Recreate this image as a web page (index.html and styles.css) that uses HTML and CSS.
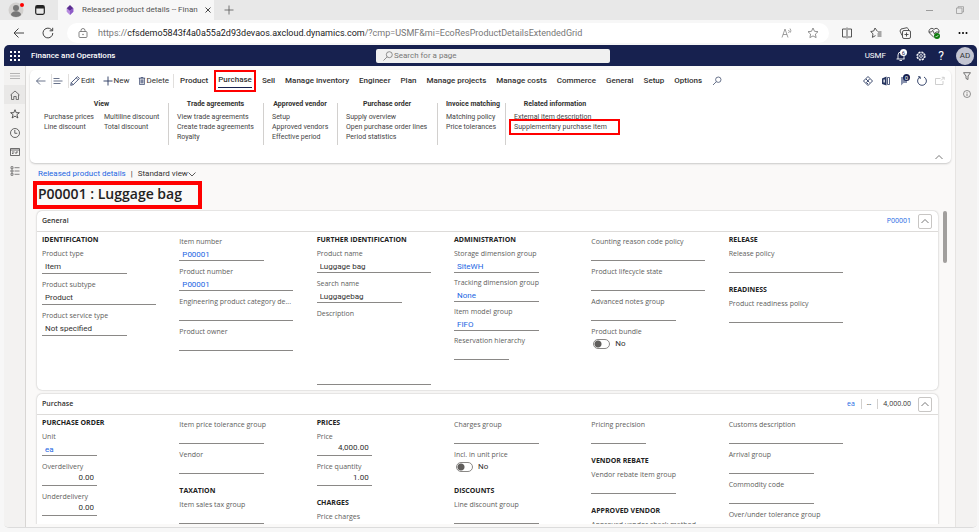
FILE: index.html
```
<!DOCTYPE html>
<html lang="en">

<head>
  <meta charset="UTF-8">
  <meta name="viewport" content="width=device-width, initial-scale=1.0">
  <title>Released product details -- Finance and Operations</title>
  <link rel="stylesheet" href="styles.css">
</head>

<body>
  <!-- browser tabs -->
  <div class="tabBar">
    <span class="profile">
      <svg class="icon16" viewBox="0 0 16 16"><circle cx="8" cy="8" r="7.5" fill="#d2d0ce"/><circle cx="8" cy="6" r="3" fill="#777"/><path d="M3 13c0-5 10-5 10 0-2 2.600-8 2.600-10 0z" fill="#777"/></svg>
      <i class="dot"></i>
    </span>
    <svg class="icon10" viewBox="0 0 10 10"><rect x=".7" y=".7" width="8.600" height="8.600" rx="1.500" fill="none" stroke="#222" stroke-width="1.200"/><path d="M1 1h8v2.500H1z" fill="#222"/></svg>
    <div class="tab">
      <svg class="icon10" viewBox="0 0 10 12"><path d="M5 0l4 4-4 4-4-4z" fill="#5b2d91"/><path d="M1 4l4 3 4-3v4l-4 4-4-4z" fill="#b78be0"/><path d="M5 7l4-3v4l-4 4z" fill="#8d5cc7"/></svg>
      <span class="tabTitle">Released product details -- Finan</span>
      <button class="iconBtn" aria-label="Close tab"><svg class="icon6" viewBox="0 0 6 6"><path d="M.5.5l5 5M5.500.5l-5 5" fill="none" stroke="#333" stroke-width=".9"/></svg></button>
    </div>
    <button class="iconBtn" aria-label="New tab"><svg class="icon10" viewBox="0 0 10 10"><path d="M5 .5v9M.5 5h9" fill="none" stroke="#555" stroke-width=".8"/></svg></button>
    <div class="windowBtns">
      <svg class="icon8" viewBox="0 0 8 8"><path d="M0 4.500h7" stroke="#888" stroke-width=".8"/></svg>
      <svg class="icon8" viewBox="0 0 8 8"><path d="M.5 2h5.500v5.500H.5zM2 2V.7h5.500V6H6" fill="none" stroke="#999" stroke-width=".8"/></svg>
    </div>
  </div>

  <!-- address bar -->
  <div class="addressBar">
    <button class="iconBtn" aria-label="Back"><svg class="icon12" viewBox="0 0 12 12"><path d="M11 6H1M5.500 1.500L1 6l4.500 4.500" fill="none" stroke="#444"/></svg></button>
    <button class="iconBtn" aria-label="Reload"><svg class="icon12" viewBox="0 0 12 12"><path d="M10.800 6A4.900 4.900 0 1 1 9.200 2.400l1.300 1.200M10.700.8v3H7.600" fill="none" stroke="#444"/></svg></button>
    <div class="urlBox">
      <svg class="icon10" viewBox="0 0 10 10"><rect x="1" y="3.500" width="8" height="6" rx="1" fill="none" stroke="#666" stroke-width=".8"/><path d="M3 3.500V2.500a2 2 0 0 1 4 0v1" fill="none" stroke="#666" stroke-width=".8"/><circle cx="5" cy="6.500" r=".7" fill="#666"/></svg>
      <span class="url">https://<b>cfsdemo5843f4a0a55a2d93devaos.axcloud.dynamics.com</b>/?cmp=USMF&amp;mi=EcoResProductDetailsExtendedGrid</span>
      <svg class="icon12" viewBox="0 0 12 12"><path d="M1 10.500L4 2l3 8.500M2 7.500h4M7.500 3a2 2 0 0 1 0 3M9 1.500a4 4 0 0 1 .5 4" fill="none" stroke="#888" stroke-width=".8"/></svg>
      <svg class="icon12" viewBox="0 0 12 12"><path d="M6 1l1.500 3.300 3.500.4-2.600 2.400.7 3.500L6 8.900l-3.100 1.700.7-3.500L1 4.700l3.500-.4z" fill="none" stroke="#777" stroke-width=".8"/></svg>
    </div>
    <div class="browserBtns">
      <svg class="icon12" viewBox="0 0 12 12"><path d="M5 2H1.500v8H5M7 2h3.500v8H7M6 .5v11" fill="none" stroke="#444" stroke-width=".9"/></svg>
      <svg class="icon12" viewBox="0 0 12 12"><path d="M7.500 4.500L5 1 3.700 4 .7 4.500l2.300 2.300-.6 3.600L5.500 8.600M8 5h3.500M7.500 7h4M7.500 9h4" fill="none" stroke="#444" stroke-width=".9"/></svg>
      <svg class="icon12" viewBox="0 0 12 12"><path d="M3 8.500L1 4l1-2 6-1.300L9.500 2v1" fill="none" stroke="#444" stroke-width=".9"/><rect x="3.500" y="3.500" width="8" height="8" rx="1.500" fill="none" stroke="#444" stroke-width=".9"/><path d="M7.500 5.500v4M5.500 7.500h4" stroke="#444" stroke-width=".9"/></svg>
      <svg class="icon12" viewBox="0 0 12 12"><path d="M6 10.500L1.500 6C-.5 3 3.500-.5 6 2.500 8.500-.5 12.500 3 10.500 6M.8 5h2.700l1.200-1.700L6.500 7 8 5h3" fill="none" stroke="#444" stroke-width=".9"/><circle cx="9" cy="9" r="3" fill="#107c10"/><path d="M7.600 9l1 1 1.800-2" fill="none" stroke="#fff" stroke-width=".7"/></svg>
      <svg class="icon12" viewBox="0 0 12 12"><circle cx="2.500" cy="6" r="1"/><circle cx="6" cy="6" r="1"/><circle cx="9.500" cy="6" r="1"/></svg>
    </div>
  </div>

  <div class="app">
    <header class="topBar">
      <svg class="icon10" viewBox="0 0 10 10" fill="#fff"><path d="M0 0h2v2H0zM4 0h2v2H4zM8 0h2v2H8zM0 4h2v2H0zM4 4h2v2H4zM8 4h2v2H8zM0 8h2v2H0zM4 8h2v2H4zM8 8h2v2H8z"/></svg>
      <span class="appName">Finance and Operations</span>
      <div class="searchBox">
        <svg class="icon10" viewBox="0 0 10 10"><circle cx="6.300" cy="3.700" r="3" fill="none" stroke="#777" stroke-width=".8"/><path d="M4.200 5.800L.5 9.500" stroke="#777" stroke-width=".8"/></svg>
        <input type="text" placeholder="Search for a page" aria-label="Search for a page">
      </div>
      <div class="topRight">
        <span class="company">USMF</span>
        <span class="bell">
          <svg class="icon10" viewBox="0 0 10 10"><path d="M2 8V4a3 3 0 0 1 6 0v4M.5 8h8M3.500 9.500h2.500" fill="none" stroke="#fff" stroke-width=".9"/></svg>
          <i class="count">6</i>
        </span>
        <svg class="icon10" viewBox="0 0 10 10"><circle cx="5" cy="5" r="4" fill="none" stroke="#fff" stroke-width="1.200" stroke-dasharray="2 1.140"/><circle cx="5" cy="5" r="3.300" fill="none" stroke="#fff" stroke-width=".6"/><circle cx="5" cy="5" r="1.400" fill="none" stroke="#fff" stroke-width=".8"/></svg>
        <span class="help">?</span>
        <span class="avatar">AD</span>
      </div>
    </header>

    <div class="workspace">
      <nav class="leftRail">
        <a href="#" aria-label="Menu"><svg class="icon10" viewBox="0 0 10 10"><path d="M0 2.500h10M0 5h10M0 7.500h10" stroke="#999" stroke-width=".7"/></svg></a>
        <a href="#" class="current" aria-label="Home"><svg class="icon10" viewBox="0 0 10 10"><path d="M.5 5L5 1l4.500 4M1.500 4.500v5h2.300v-3h2.400v3h2.300v-5" fill="none" stroke="#555" stroke-width=".8"/></svg></a>
        <a href="#" aria-label="Favorites"><svg class="icon10" viewBox="0 0 10 10"><path d="M5 .7l1.200 3h3.200L6.900 5.700l1 3.300L5 7.100 2.100 9l1-3.300L.6 3.700h3.200z" fill="none" stroke="#333" stroke-width=".8"/></svg></a>
        <a href="#" aria-label="Recent"><svg class="icon10" viewBox="0 0 10 10"><circle cx="5" cy="5" r="4.500" fill="none" stroke="#444" stroke-width=".8"/><path d="M4.800 2v3.300h2.500" fill="none" stroke="#444" stroke-width=".8"/></svg></a>
        <a href="#" aria-label="Workspaces"><svg class="icon10" viewBox="0 0 10 10"><path d="M.5 1.500h9v7h-9zM.5 3h9M2 5h2.500M2 6.500h1.500M6 5h2M6 5v2" fill="none" stroke="#333" stroke-width=".7"/></svg></a>
        <a href="#" aria-label="Modules"><svg class="icon10" viewBox="0 0 10 10"><path d="M1 .7h2v2H1zM1 4h2v2H1zM1 7.300h2v2H1zM4.500 1.700h5M4.500 5h5M4.500 8.300h5" fill="none" stroke="#555" stroke-width=".7"/></svg></a>
      </nav>

      <main class="content">
        <section class="ribbon">
          <div class="actionBar">
            <button class="iconBtn" aria-label="Back"><svg class="icon10" viewBox="0 0 10 10"><path d="M9.500 5H.5M4 1.500L.5 5 4 8.500" fill="none" stroke="#44506f" stroke-width=".8"/></svg></button>
            <i class="divider"></i>
            <button class="iconBtn" aria-label="Show list"><svg class="icon10" viewBox="0 0 10 10"><path d="M.5 2.500h6M.5 5h9M.5 7.500h7" stroke="#44506f" stroke-width=".8"/></svg></button>
            <i class="divider"></i>
            <button class="command"><svg class="icon10" viewBox="0 0 10 10"><path d="M.7 9.300l.6-2.600L7.500.6l1.900 1.900-6.200 6.200zM6.300 1.800l1.900 1.900M1.300 6.700l1.900 2" fill="none" stroke="#26355f" stroke-width=".8"/></svg>Edit</button>
            <button class="command"><svg class="icon10" viewBox="0 0 10 10"><path d="M5 .5v9M.5 5h9" stroke="#26355f" stroke-width=".9"/></svg>New</button>
            <button class="command"><svg class="icon8" viewBox="0 0 8 10"><path d="M0 1.500h8M2.800 1.500V.5h2.400v1M1 1.500v8h6v-8M2.800 3v5M4 3v5M5.200 3v5" fill="none" stroke="#26355f" stroke-width=".9"/></svg>Delete</button>
            <i class="divider"></i>
            <div class="menu">
              <button>Product</button>
              <button class="active marked">Purchase</button>
              <button>Sell</button>
              <button>Manage inventory</button>
              <button>Engineer</button>
              <button>Plan</button>
              <button>Manage projects</button>
              <button>Manage costs</button>
              <button>Commerce</button>
              <button>General</button>
              <button>Setup</button>
              <button>Options</button>
              <button aria-label="Search actions"><svg class="icon10" viewBox="0 0 10 10"><circle cx="6.300" cy="3.700" r="2.700" fill="none" stroke="#44506f" stroke-width=".8"/><path d="M4.300 5.700L1 9" stroke="#44506f" stroke-width=".8"/></svg></button>
            </div>
            <div class="tools">
              <svg class="icon10" viewBox="0 0 10 10"><path d="M5 .5L9.500 5 5 9.500.5 5zM3 3l3.500 3.500M6.500 3L3.500 6.500 5 8" fill="none" stroke="#26355f" stroke-width=".9"/></svg>
              <svg class="icon10" viewBox="0 0 10 10"><path d="M1 2.500L5.500.5v9L1 8z" fill="#26355f"/><path d="M2.500 3.500h1.300v3H2.500z" fill="#fff"/><path d="M6.500 1.500h2v7h-2z" fill="none" stroke="#26355f" stroke-width=".8"/></svg>
              <span class="bell">
                <svg class="icon10" viewBox="0 0 10 10"><path d="M2 1h6v6H4.500L2 9.500z" fill="#8791ad"/></svg>
                <i class="count dark">0</i>
              </span>
              <svg class="icon10" viewBox="0 0 10 10"><path d="M3 1a4.400 4.400 0 1 0 4 0M1 .8h2.200V3" fill="none" stroke="#26355f" stroke-width=".9"/></svg>
              <svg class="icon10" viewBox="0 0 10 10"><path d="M5.500 2.500H.5v6h7.500V5M6 4.500l3-3M6.800 1.300h2.400v2.400" fill="none" stroke="#c3c3c3" stroke-width=".8"/></svg>
            </div>
          </div>

          <div class="groups">
            <div class="group">
              <h3>View</h3>
              <div class="links">
                <a href="#">Purchase prices</a><a href="#">Line discount</a>
              </div>
              <div class="links">
                <a href="#">Multiline discount</a><a href="#">Total discount</a>
              </div>
            </div>
            <div class="group">
              <h3>Trade agreements</h3>
              <div class="links">
                <a href="#">View trade agreements</a><a href="#">Create trade agreements</a><a href="#">Royalty</a>
              </div>
            </div>
            <div class="group">
              <h3>Approved vendor</h3>
              <div class="links">
                <a href="#">Setup</a><a href="#">Approved vendors</a><a href="#">Effective period</a>
              </div>
            </div>
            <div class="group">
              <h3>Purchase order</h3>
              <div class="links">
                <a href="#">Supply overview</a><a href="#">Open purchase order lines</a><a href="#">Period statistics</a>
              </div>
            </div>
            <div class="group">
              <h3>Invoice matching</h3>
              <div class="links">
                <a href="#">Matching policy</a><a href="#">Price tolerances</a>
              </div>
            </div>
            <div class="group">
              <h3>Related information</h3>
              <div class="links">
                <a href="#">External item description</a><a href="#" class="marked">Supplementary purchase item</a>
              </div>
            </div>
          </div>
          <button class="iconBtn collapse" aria-label="Collapse ribbon"><svg class="icon8" viewBox="0 0 8 8"><path d="M.5 6L4 2.500 7.500 6" fill="none" stroke="#555" stroke-width=".8"/></svg></button>
        </section>

        <div class="crumbs">
          <a href="#">Released product details</a>
          <span>|</span>
          <button class="viewBtn">Standard view<svg class="icon8" viewBox="0 0 8 8"><path d="M.5 2.500L4 6l3.500-3.500" fill="none" stroke="#333" stroke-width=".8"/></svg></button>
        </div>
        <h1 class="pageTitle">P00001 : Luggage bag</h1>

        <div class="panels">
          <section class="card">
            <div class="cardHead">
              <h2>General</h2>
              <a href="#">P00001</a>
              <button class="toggleBtn" aria-label="Collapse General"><svg class="icon8" viewBox="0 0 8 8"><path d="M.5 6L4 2.500 7.500 6" fill="none" stroke="#555" stroke-width=".8"/></svg></button>
            </div>
            <div class="cardBody general">
              <div class="col loose">
                <h4>IDENTIFICATION</h4>
                <div class="field"><label for="pType">Product type</label><input type="text" id="pType" value="Item"></div>
                <div class="field wide"><label for="pSub">Product subtype</label><input type="text" id="pSub" value="Product"></div>
                <div class="field"><label for="pService">Product service type</label><input type="text" id="pService" value="Not specified"></div>
              </div>
              <div class="col noHead">
                <div class="field link"><label for="itemNo">Item number</label><input type="text" id="itemNo" value="P00001"></div>
                <div class="field wide link"><label for="prodNo">Product number</label><input type="text" id="prodNo" value="P00001"></div>
                <div class="field wide"><label for="engCat">Engineering product category de...</label><input type="text" id="engCat"></div>
                <div class="field wide"><label for="owner">Product owner</label><input type="text" id="owner"></div>
              </div>
              <div class="col">
                <h4>FURTHER IDENTIFICATION</h4>
                <div class="field wide"><label for="pName">Product name</label><input type="text" id="pName" value="Luggage bag"></div>
                <div class="field"><label for="sName">Search name</label><input type="text" id="sName" value="Luggagebag"></div>
                <div class="field wide"><label for="descr">Description</label><textarea id="descr"></textarea></div>
              </div>
              <div class="col tight">
                <h4>ADMINISTRATION</h4>
                <div class="field link"><label for="storage">Storage dimension group</label><input type="text" id="storage" value="SiteWH"></div>
                <div class="field link"><label for="tracking">Tracking dimension group</label><input type="text" id="tracking" value="None"></div>
                <div class="field link"><label for="model">Item model group</label><input type="text" id="model" value="FIFO"></div>
                <div class="field small"><label for="reserv">Reservation hierarchy</label><input type="text" id="reserv"></div>
              </div>
              <div class="col noHead">
                <div class="field wide"><label for="reason">Counting reason code policy</label><input type="text" id="reason"></div>
                <div class="field wide"><label for="lifecycle">Product lifecycle state</label><input type="text" id="lifecycle"></div>
                <div class="field"><label for="notes">Advanced notes group</label><input type="text" id="notes"></div>
                <div class="field switch"><label for="bundle">Product bundle</label><input type="checkbox" id="bundle"><span>No</span></div>
              </div>
              <div class="col">
                <h4>RELEASE</h4>
                <div class="field wide"><label for="release">Release policy</label><input type="text" id="release"></div>
                <h4>READINESS</h4>
                <div class="field wide"><label for="ready">Product readiness policy</label><input type="text" id="ready"></div>
              </div>
            </div>
          </section>

          <section class="card">
            <div class="cardHead">
              <h2>Purchase</h2>
              <a href="#">ea</a>
              <span class="summary">--</span>
              <span class="summary">4,000.00</span>
              <button class="toggleBtn" aria-label="Collapse Purchase"><svg class="icon8" viewBox="0 0 8 8"><path d="M.5 6L4 2.500 7.500 6" fill="none" stroke="#555" stroke-width=".8"/></svg></button>
            </div>
            <div class="cardBody">
              <div class="col">
                <h4>PURCHASE ORDER</h4>
                <div class="field small link"><label for="unit">Unit</label><input type="text" id="unit" value="ea"></div>
                <div class="field small number"><label for="over">Overdelivery</label><input type="text" id="over" value="0.00"></div>
                <div class="field small number"><label for="under">Underdelivery</label><input type="text" id="under" value="0.00"></div>
                <div class="field small number"><label for="inter">Intercompany overdelivery</label><input type="text" id="inter" value="0.00"></div>
              </div>
              <div class="col noHead">
                <div class="field"><label for="tolerance">Item price tolerance group</label><input type="text" id="tolerance"></div>
                <div class="field"><label for="vendor">Vendor</label><input type="text" id="vendor"></div>
                <h4>TAXATION</h4>
                <div class="field"><label for="tax">Item sales tax group</label><input type="text" id="tax"></div>
              </div>
              <div class="col">
                <h4>PRICES</h4>
                <div class="field small number"><label for="price">Price</label><input type="text" id="price" value="4,000.00"></div>
                <div class="field small number"><label for="priceQty">Price quantity</label><input type="text" id="priceQty" value="1.00"></div>
                <h4>CHARGES</h4>
                <div class="field small number"><label for="charges">Price charges</label><input type="text" id="charges" value="0.00"></div>
              </div>
              <div class="col noHead">
                <div class="field"><label for="chGroup">Charges group</label><input type="text" id="chGroup"></div>
                <div class="field switch"><label for="incl">Incl. in unit price</label><input type="checkbox" id="incl"><span>No</span></div>
                <h4>DISCOUNTS</h4>
                <div class="field"><label for="lineDisc">Line discount group</label><input type="text" id="lineDisc"></div>
              </div>
              <div class="col noHead">
                <div class="field small"><label for="precision">Pricing precision</label><input type="text" id="precision"></div>
                <h4>VENDOR REBATE</h4>
                <div class="field"><label for="rebate">Vendor rebate item group</label><input type="text" id="rebate"></div>
                <h4>APPROVED VENDOR</h4>
                <div class="field wide"><label for="check">Approved vendor check method</label><input type="text" id="check"></div>
              </div>
              <div class="col noHead">
                <div class="field wide"><label for="customs">Customs description</label><input type="text" id="customs"></div>
                <div class="field"><label for="arrival">Arrival group</label><input type="text" id="arrival"></div>
                <div class="field"><label for="commodity">Commodity code</label><input type="text" id="commodity"></div>
                <div class="field"><label for="ouTol">Over/under tolerance group</label><input type="text" id="ouTol"></div>
              </div>
            </div>
          </section>
          <i class="scrollThumb"></i>
        </div>
      </main>

      <aside class="rightRail">
        <svg class="icon8" viewBox="0 0 8 8"><path d="M.5.7h7L5 4v3.500l-2-1V4z" fill="none" stroke="#555" stroke-width=".8"/></svg>
        <svg class="icon8" viewBox="0 0 8 8"><circle cx="4" cy="4" r="3.500" fill="none" stroke="#666" stroke-width=".7"/><path d="M4 3.500V6M4 2v.8" stroke="#666" stroke-width=".8"/></svg>
      </aside>
    </div>
  </div>
</body>

</html>
```
FILE: styles.css
```
* {
  box-sizing: border-box;
}

body {
  margin: 0;
  height: 100vh;
  display: flex;
  flex-direction: column;
  overflow: hidden;
  background-color: #f7f7f7;
  color: #323130;
  font-family: Roboto, "Open Sans", sans-serif;
  font-size: 8px;
  line-height: 10px;
}

h1, h2, h3, h4 {
  margin: 0;
  font-size: 7px;
  font-weight: 600;
}

a {
  color: #2266e3;
  text-decoration: none;
}

i {
  font-style: normal;
}

button, input, textarea {
  font: inherit;
  color: inherit;
}

button {
  padding: 0;
  border: none;
  background: none;
  cursor: pointer;
}

svg {
  display: block;
  flex: none;
}

.icon6 { width: 6px; height: 6px; }
.icon8 { width: 8px; height: 8px; }
.icon10 { width: 10px; height: 10px; }
.icon12 { width: 12px; height: 12px; }
.icon16 { width: 16px; height: 16px; }

/* browser */
.tabBar {
  display: flex;
  align-items: center;
  height: 20px;
  flex: none;
  padding-left: 8px;
  background-color: #e8e8e8;
}

.profile {
  position: relative;
  margin-right: 11px;
}

.dot {
  position: absolute;
  top: 1px;
  right: 0;
  width: 4px;
  height: 4px;
  border-radius: 50%;
  background-color: #f00;
}

.tab {
  display: flex;
  align-items: center;
  gap: 7px;
  width: 156px;
  height: 20px;
  margin: 0 10px 0 13px;
  padding: 0 7px;
  background-color: #f7f7f7;
}

.tabTitle {
  flex: 1;
  white-space: nowrap;
  color: #555;
}

.windowBtns {
  display: flex;
  gap: 22px;
  margin-left: auto;
  padding-right: 15px;
}

.addressBar {
  display: flex;
  align-items: center;
  height: 25px;
  flex: none;
  padding: 0 10px 0 13px;
}

.addressBar .iconBtn {
  margin-right: 17px;
}

.urlBox {
  flex: 1;
  display: flex;
  align-items: center;
  gap: 14px;
  height: 20px;
  margin-left: -4px;
  padding: 0 10px 0 11px;
  border-radius: 10px;
  background-color: #fff;
}

.url {
  flex: 1;
  margin-left: -4px;
  white-space: nowrap;
  font-size: 9px;
  line-height: 14px;
  color: #777;
}

.url b {
  font-weight: 400;
  color: #222;
}

.browserBtns {
  display: flex;
  gap: 17px;
  padding-left: 12px;
}

/* application frame */
.app {
  flex: 1;
  display: flex;
  flex-direction: column;
  min-height: 0;
  margin: 0 2px 4px 4px;
  border-bottom: 1px solid #dcdcdc;
  border-radius: 5px;
  overflow: hidden;
  background-color: #faf9f8;
}

.topBar {
  display: flex;
  align-items: center;
  height: 21px;
  flex: none;
  padding: 0 3px 0 6px;
  background-color: #17214f;
  color: #fff;
}

.appName {
  width: 356px;
  padding-left: 11px;
  font-weight: 500;
}

.searchBox {
  display: flex;
  align-items: center;
  gap: 1px;
  width: 234px;
  height: 14px;
  padding-left: 7px;
  border-radius: 2px;
  background-color: #f0f0f0;
}

.searchBox input {
  flex: 1;
  min-width: 0;
  padding: 0;
  border: none;
  background: none;
  outline: none;
}

.searchBox input::placeholder {
  color: #777;
}

.topRight {
  display: flex;
  align-items: center;
  gap: 10px;
  margin-left: auto;
}

.bell {
  position: relative;
}

.count {
  position: absolute;
  top: -2px;
  right: -1px;
  width: 7px;
  height: 7px;
  border-radius: 50%;
  background-color: #fff;
  color: #17214f;
  font-size: 6px;
  line-height: 7px;
  text-align: center;
}

.count.dark {
  background-color: #17214f;
  color: #fff;
}

.help {
  width: 10px;
  font-size: 12px;
  text-align: center;
}

.avatar {
  width: 18px;
  height: 18px;
  border-radius: 50%;
  background-color: #c3c5d2;
  color: #333;
  line-height: 18px;
  text-align: center;
}

.workspace {
  flex: 1;
  display: flex;
  min-height: 0;
}

.leftRail {
  width: 22px;
  flex: none;
  border-right: 1px solid #d8d6d4;
  background-color: #f3f2f1;
}

.leftRail a {
  display: flex;
  align-items: center;
  justify-content: center;
  height: 19px;
}

.leftRail .current {
  background-color: #e9e8e7;
}

.rightRail {
  display: flex;
  flex-direction: column;
  align-items: center;
  gap: 10px;
  width: 22px;
  flex: none;
  padding-top: 6px;
  border-left: 1px solid #e6e4e2;
  background-color: #f3f2f1;
}

.content {
  flex: 1;
  display: flex;
  flex-direction: column;
  min-width: 0;
  padding: 4px 4px 3px;
}

/* ribbon */
.ribbon {
  position: relative;
  height: 93px;
  flex: none;
  border-radius: 5px;
  background-color: #fff;
  box-shadow: 0 1px 2px rgba(0, 0, 0, 0.2);
}

.actionBar {
  display: flex;
  align-items: center;
  height: 21px;
  padding: 0 6px;
}

.divider {
  width: 1px;
  height: 14px;
  margin: 0 3px 0 5px;
  background-color: #e1dfdd;
}

.iconBtn + .divider {
  margin-right: 1px;
}

.command {
  display: flex;
  align-items: center;
  gap: 1px;
  margin-right: 8px;
}

.command + .divider {
  margin: 0 6px 0 -4px;
}

.menu {
  display: flex;
  align-items: center;
  gap: 10px;
}

.menu button {
  height: 14px;
  font-weight: 500;
  white-space: nowrap;
}

.menu .active {
  border-bottom: 1px solid #17214f;
}

.marked {
  outline: 2px solid #f00;
  outline-offset: 2px;
}

.tools {
  display: flex;
  gap: 8px;
  margin-left: auto;
}

.groups {
  display: grid;
  grid-template-columns: 133px 95px 74px 100px 68px 100px;
  height: 50px;
  margin: 8px 0 0 5px;
  font-size: 7px;
}

.group {
  position: relative;
  display: flex;
  flex-wrap: wrap;
  align-content: flex-start;
  column-gap: 10px;
  padding: 0 0 0 9px;
}

.group + .group::before {
  content: "";
  position: absolute;
  left: 0;
  top: 4px;
  width: 1px;
  height: 42px;
  background-color: #d2d0ce;
}

.group h3 {
  width: 100%;
  padding-right: 9px;
  margin-bottom: 3px;
  font-weight: 700;
  text-align: center;
  white-space: nowrap;
}

.links {
  display: flex;
  flex-direction: column;
}

.links a {
  color: #444;
  white-space: nowrap;
}

.links .marked {
  margin: 0 -10px 0 -2px;
  padding: 0 10px 0 2px;
  outline-offset: 1px;
}

.collapse {
  position: absolute;
  right: 8px;
  bottom: 2px;
}

/* page heading */
.crumbs {
  display: flex;
  gap: 5px;
  margin: 6px 0 0 8px;
}

.viewBtn {
  display: flex;
  align-items: center;
}

.pageTitle {
  align-self: flex-start;
  width: 169px;
  height: 28px;
  margin: 2px 0 1px 3px;
  border: 4px solid #f00;
  padding-left: 1px;
  color: #222;
  font-family: "Open Sans", sans-serif;
  font-size: 14px;
  line-height: 18px;
  white-space: nowrap;
}

/* fast tabs */
.panels {
  position: relative;
  flex: 1;
  min-height: 0;
  padding: 1px 13px 0 7px;
  overflow: hidden;
}

.card {
  margin-bottom: 4px;
  border-radius: 5px;
  background-color: #fff;
  box-shadow: 0 0 2px rgba(0, 0, 0, 0.3);
}

.cardHead {
  display: flex;
  align-items: center;
  height: 21px;
  padding: 0 6px 0 5px;
  border-bottom: 1px solid #dddbd9;
  font-family: "Open Sans", sans-serif;
  font-size: 7px;
}

.cardHead h2 {
  margin-right: auto;
}

.summary {
  margin-left: 6px;
  padding-left: 5px;
  border-left: 1px solid #d2d0ce;
}

.toggleBtn {
  display: flex;
  align-items: center;
  justify-content: center;
  width: 14px;
  height: 15px;
  margin-left: 7px;
  border: 1px solid #c8c6c4;
  border-radius: 2px;
}

.cardBody {
  display: grid;
  grid-template-columns: repeat(6, 1fr);
  padding: 3px 72px 4px 5px;
}

.general {
  height: 158px;
}

.noHead {
  padding-top: 2px;
}

.col h4 {
  margin-bottom: 4px;
  color: #222;
  font-family: "Open Sans", sans-serif;
  font-weight: 700;
}

.field + h4 {
  margin-top: 6px;
}

.field {
  width: 85px;
  height: 30px;
}

.field.wide {
  width: 114px;
}

.field.small {
  width: 55px;
}

.field label {
  display: block;
  color: #605e5c;
  font-family: "Open Sans", sans-serif;
  font-size: 7px;
  font-weight: 500;
  white-space: nowrap;
}

.field input[type="text"], .field textarea {
  display: block;
  width: 100%;
  height: 14px;
  padding: 2px 3px 1px;
  border: none;
  border-bottom: 1px solid #8a8886;
  background: none;
  outline: none;
}

.field textarea {
  height: 66px;
  resize: none;
}

.loose .field {
  height: 31px;
}

.loose .field input[type="text"] {
  height: 15px;
}

.tight .field {
  height: 29px;
}

.field.link input[type="text"] {
  color: #2266e3;
}

.field.number input[type="text"] {
  padding: 0 3px 2px;
  text-align: right;
}

.switch {
  display: flex;
  flex-wrap: wrap;
  align-items: center;
  align-content: flex-start;
  column-gap: 5px;
}

.switch label {
  width: 100%;
}

.switch input {
  appearance: none;
  width: 17px;
  height: 10px;
  margin: 1px 0 0 2px;
  border: 1px solid #8a8886;
  border-radius: 5px;
  background: radial-gradient(circle at 4px 4px, #605e5c 3px, transparent 4px);
}

.switch span {
  padding-top: 2px;
}

.scrollThumb {
  position: absolute;
  top: 1px;
  right: 4px;
  width: 4px;
  height: 52px;
  border-radius: 2px;
  background-color: #a19f9d;
}
```
